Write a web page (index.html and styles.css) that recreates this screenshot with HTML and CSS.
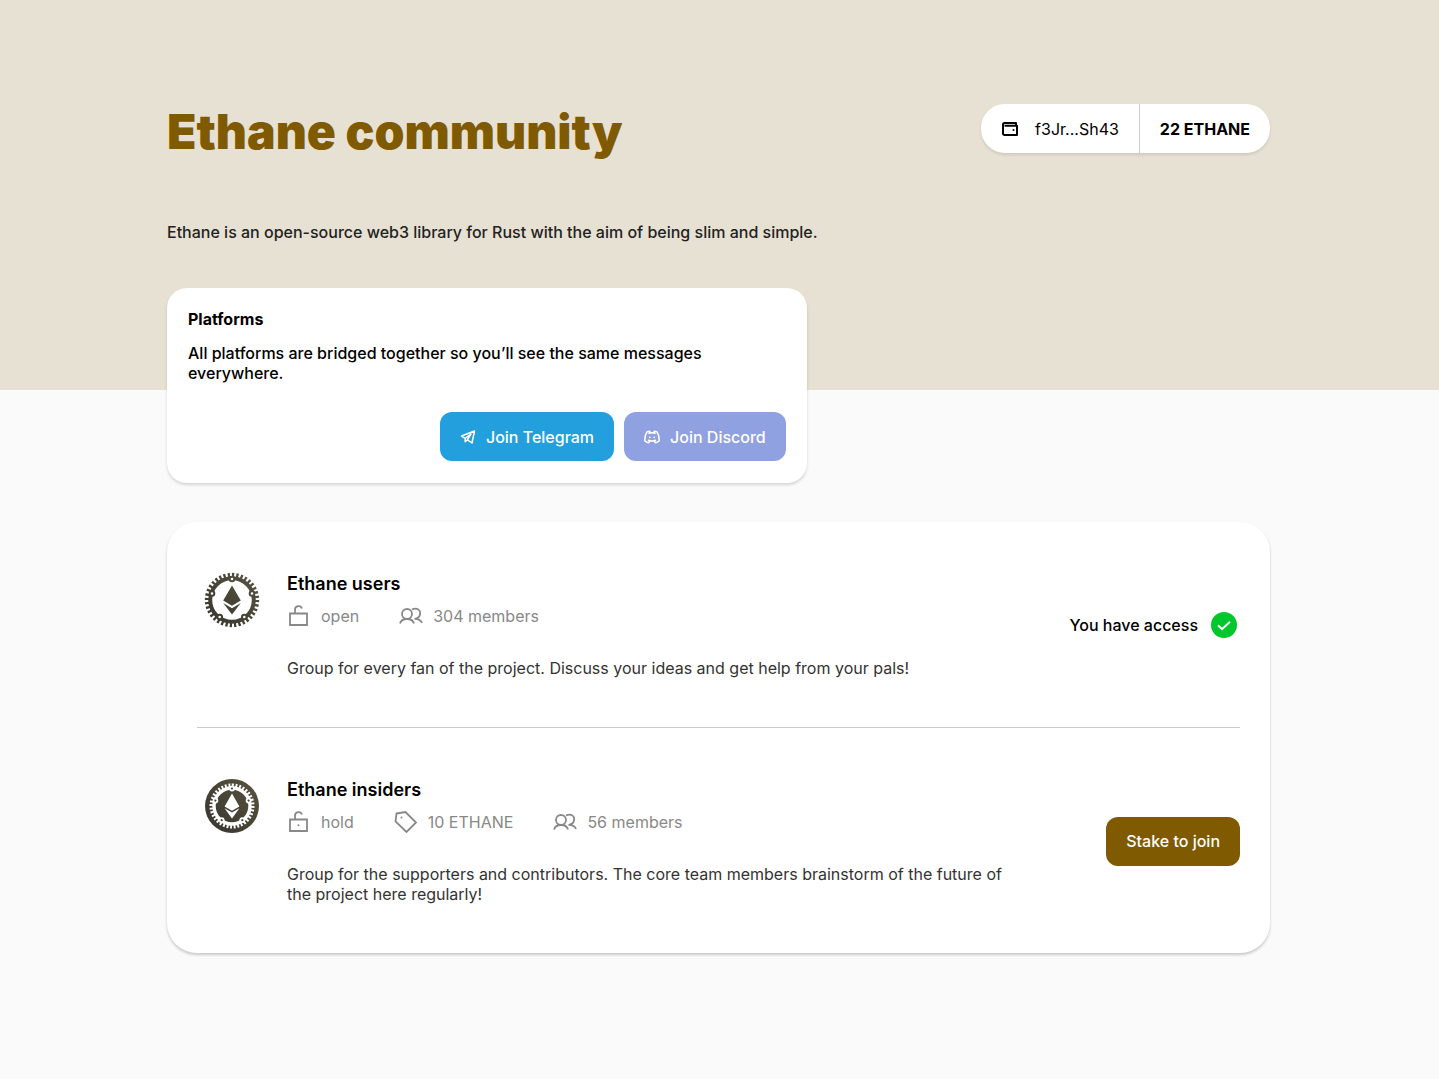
FILE: index.html
```html
<!DOCTYPE html>
<html lang="en">
<head>
<meta charset="utf-8">
<meta name="viewport" content="width=device-width, initial-scale=1">
<title>Ethane community</title>
<link rel="stylesheet" href="styles.css">
</head>
<body>
<svg class="defs" aria-hidden="true">
  <defs>
    <linearGradient id="metal" gradientUnits="userSpaceOnUse" x1="4" y1="52" x2="52" y2="4">
      <stop offset="0" stop-color="#38372f"/><stop offset="1" stop-color="#57523f"/>
    </linearGradient>
    <symbol id="members" viewBox="0 0 24 18">
      <circle cx="8" cy="7" r="5"/><path d="M1 16.500c.8-3 3.600-4.500 7-4.500s6.200 1.500 7 4.500M13 2.500c5-2.500 9 .5 8 5-.5 2.500-2.500 4-5.500 4.300 3.500 0 6.500 1 7.500 4.200"/>
    </symbol>
  </defs>
</svg>
<main class="page">
  <header class="top">
    <h1 class="title">Ethane community</h1>
    <div class="account">
      <button class="account-part" type="button">
        <svg class="wallet" viewBox="0 0 18 16" aria-hidden="true"><path d="M15 4V2H3.500a1.500 1.500 0 0 0-1.500 1.500V12.500a1.500 1.500 0 0 0 1.500 1.500H16V4.800H3.500"/><circle class="dot" cx="12.500" cy="9" r="1"/></svg>
        f3Jr...Sh43
      </button>
      <button class="account-part account-balance" type="button">22 ETHANE</button>
    </div>
  </header>
  <p class="intro">Ethane is an open-source web3 library for Rust with the aim of being slim and simple.</p>

  <section class="platforms">
    <h2 class="platforms-title">Platforms</h2>
    <p class="platforms-text">All platforms are bridged together so you’ll see the same messages everywhere.</p>
    <div class="actions">
      <button class="button telegram" type="button">
        <svg class="button-icon" viewBox="0 0 16 16" aria-hidden="true"><path d="M14.500 2 1.500 7l3.700 2.300v3.500l2.300-2 4.500 3.200ZM5.200 9.300 11 5 7.500 10.500"/></svg>
        Join Telegram
      </button>
      <button class="button discord" type="button">
        <svg class="button-icon" viewBox="0 0 16 16" aria-hidden="true"><path d="M5 4.200c2-.6 4-.6 6 0M4.500 11.300c2.300.9 4.700.9 7 0M10.300 12l1 1.700c1.800-.2 3-1 3.900-2 .1-3.200-.6-6-2-8.500-1-.6-2-.9-2.900-1l-.7 1.500M5.700 12l-1 1.700c-1.800-.2-3-1-3.900-2-.1-3.200.6-6 2-8.500 1-.6 2-.9 2.900-1l.7 1.500"/><circle class="dot" cx="5.800" cy="8.300" r=".9"/><circle class="dot" cx="10.200" cy="8.300" r=".9"/></svg>
        Join Discord
      </button>
    </div>
  </section>

  <section class="levels">
    <article class="level">
      <svg class="badge" viewBox="0 0 56 56" aria-hidden="true">
        <g fill="none" stroke="url(#metal)">
          <circle cx="28" cy="28" r="21.800" stroke-width="4"/>
          <circle cx="28" cy="28" r="25" stroke-width="4.400" pathLength="72" stroke-dasharray="1.050 .95"/>
        </g>
        <g fill="#fff" stroke="url(#metal)" stroke-width="2">
          <circle cx="28" cy="7" r="2.300"/><circle cx="48" cy="21.500" r="2.300"/><circle cx="40.300" cy="45" r="2.300"/><circle cx="15.700" cy="45" r="2.300"/><circle cx="8" cy="21.500" r="2.300"/>
        </g>
        <path fill="url(#metal)" d="M28 13.500 36.800 28.500 28 33.800 19.200 28.500ZM19.200 31 28 36.200 36.800 31 28 42.500Z"/>
      </svg>
      <div class="level-info">
        <h2 class="level-name">Ethane users</h2>
        <ul class="facts">
          <li class="fact"><svg class="lock" viewBox="0 0 24 24" aria-hidden="true"><path d="M3 9.500h17v11.500H3zM8 9.500V5.800a3.600 3.600 0 0 1 7-1.300"/></svg>open</li>
          <li class="fact"><svg class="people" viewBox="0 0 24 18" aria-hidden="true"><use href="#members"/></svg>304 members</li>
        </ul>
        <p class="level-text">Group for every fan of the project. Discuss your ideas and get help from your pals!</p>
      </div>
      <div class="access">You have access
        <svg class="check" viewBox="0 0 26 26" aria-hidden="true"><circle cx="13" cy="13" r="13"/><path d="m7 13.200 4 4 8-7.500"/></svg>
      </div>
    </article>
    <article class="level">
      <svg class="badge" viewBox="0 0 56 56" aria-hidden="true">
        <circle cx="28" cy="28" r="27" fill="url(#metal)"/>
        <g fill="none" stroke="#fff">
          <circle cx="28" cy="28" r="18" stroke-width="3.400"/>
          <circle cx="28" cy="28" r="20.600" stroke-width="3.800" pathLength="72" stroke-dasharray="1.050 .95"/>
        </g>
        <g fill="#4a463a" stroke="#fff" stroke-width="1.800">
          <circle cx="28" cy="10.500" r="2"/><circle cx="44.600" cy="22.600" r="2"/><circle cx="38.300" cy="42.200" r="2"/><circle cx="17.700" cy="42.200" r="2"/><circle cx="11.400" cy="22.600" r="2"/>
        </g>
        <path fill="#fff" d="M28 15.500 35.400 28.400 28 32.800 20.600 28.400ZM20.600 30.200 28 34.500 35.400 30.200 28 40.500Z"/>
      </svg>
      <div class="level-info">
        <h2 class="level-name">Ethane insiders</h2>
        <ul class="facts">
          <li class="fact"><svg class="lock" viewBox="0 0 24 24" aria-hidden="true"><path d="M3 9.500h17v11.500H3zM8 9.500V5.800a3.600 3.600 0 0 1 7-1.300"/><circle class="dot" cx="11.500" cy="15.300" r="1"/></svg>hold</li>
          <li class="fact"><svg class="tag" viewBox="0 0 24 24" aria-hidden="true"><path d="M2.500 3.500 11.500 2 22 12.500 12.500 22 1.500 11.500Z"/><circle class="dot" cx="7.500" cy="7.500" r="1"/></svg>10 ETHANE</li>
          <li class="fact"><svg class="people" viewBox="0 0 24 18" aria-hidden="true"><use href="#members"/></svg>56 members</li>
        </ul>
        <p class="level-text">Group for the supporters and contributors. The core team members brainstorm of the future of the project here regularly!</p>
      </div>
      <button class="button stake" type="button">Stake to join</button>
    </article>
  </section>
</main>
</body>
</html>
```
FILE: styles.css
```css
* { box-sizing: border-box; }
body {
  margin: 0;
  font: 400 16px/20px Inter, "Liberation Sans", sans-serif;
  color: #000;
  background: #fafafa linear-gradient(#e7e1d3, #e7e1d3) 0 0 / 100% 390px no-repeat;
}
h1, h2, p, ul { margin: 0; padding: 0; }
button { border: 0; font: inherit; color: inherit; cursor: pointer; }
svg { flex: none; fill: none; stroke: currentColor; }
.defs { position: absolute; width: 0; height: 0; }
.dot { fill: currentColor; stroke: none; }
.page { max-width: 1439px; margin: 0 auto; padding: 104px 169px 64px 167px; }
.top { display: flex; justify-content: space-between; align-items: flex-start; gap: 24px; }
.title { font-size: 48px; line-height: 56px; font-weight: 900; color: #7f5a00; }
.account {
  display: flex;
  border-radius: 24px;
  overflow: hidden;
  background: #fff;
  box-shadow: 0 2px 3px rgba(0, 0, 0, .1);
}
.account-part { display: flex; align-items: center; gap: 16px; height: 49px; padding: 0 20px; background: none; }
.account-balance { border-left: 1px solid #ccc; font-weight: 700; }
.wallet { width: 18px; height: 16px; stroke-width: 2; stroke-linejoin: round; }
.intro { margin-top: 62px; color: #222; font-weight: 500; }
.platforms {
  width: 58%;
  margin-top: 46px;
  padding: 21px 21px 22px;
  border-radius: 20px;
  background: #fff;
  box-shadow: 0 2px 3px rgba(0, 0, 0, .15);
}
.platforms-title { font-size: 16px; line-height: 20px; font-weight: 700; }
.platforms-text { margin-top: 14px; font-weight: 500; }
.actions { display: flex; justify-content: flex-end; gap: 10px; margin-top: 29px; }
.button { display: flex; align-items: center; gap: 10px; height: 49px; padding: 0 20px; border-radius: 12px; color: #fff; font-weight: 500; }
.button-icon { width: 16px; height: 16px; stroke-width: 1.5; stroke-linejoin: round; stroke-linecap: round; }
.telegram { background: #229fdc; }
.discord { background: #8fa1e0; }
.levels {
  margin-top: 39px;
  padding: 0 30px;
  border-radius: 30px;
  background: #fff;
  box-shadow: 0 2px 3px rgba(0, 0, 0, .2);
}
.level { display: flex; align-items: center; min-height: 205px; padding: 50px 0 49px; }
.level + .level { border-top: 1px solid #ccc; }
.badge { width: 56px; height: 56px; margin: 0 27px 0 7px; align-self: flex-start; stroke: none; }
.level-info { flex: 1; max-width: 730px; }
.level-name { font-size: 18px; line-height: 24px; font-weight: 600; }
.facts { display: flex; gap: 40px; margin-top: 8px; list-style: none; color: #888; }
.fact { display: flex; align-items: center; gap: 10px; height: 24px; }
.lock, .tag, .people { width: 24px; stroke-width: 1.8; }
.lock, .tag { height: 24px; }
.people { height: 18px; }
.level-text { margin-top: 30px; color: #333; }
.access { display: flex; align-items: center; gap: 13px; margin-left: auto; padding-right: 3px; font-weight: 500; }
.check { width: 26px; height: 26px; stroke: none; fill: #00c72c; }
.check path { fill: none; stroke: #fff; stroke-width: 2; }
.stake { margin-left: auto; background: #7f5a00; }
@media (max-width: 1000px) {
  .page { padding: 48px 24px; }
  .top, .level { flex-wrap: wrap; }
  .platforms { width: auto; }
}
```
